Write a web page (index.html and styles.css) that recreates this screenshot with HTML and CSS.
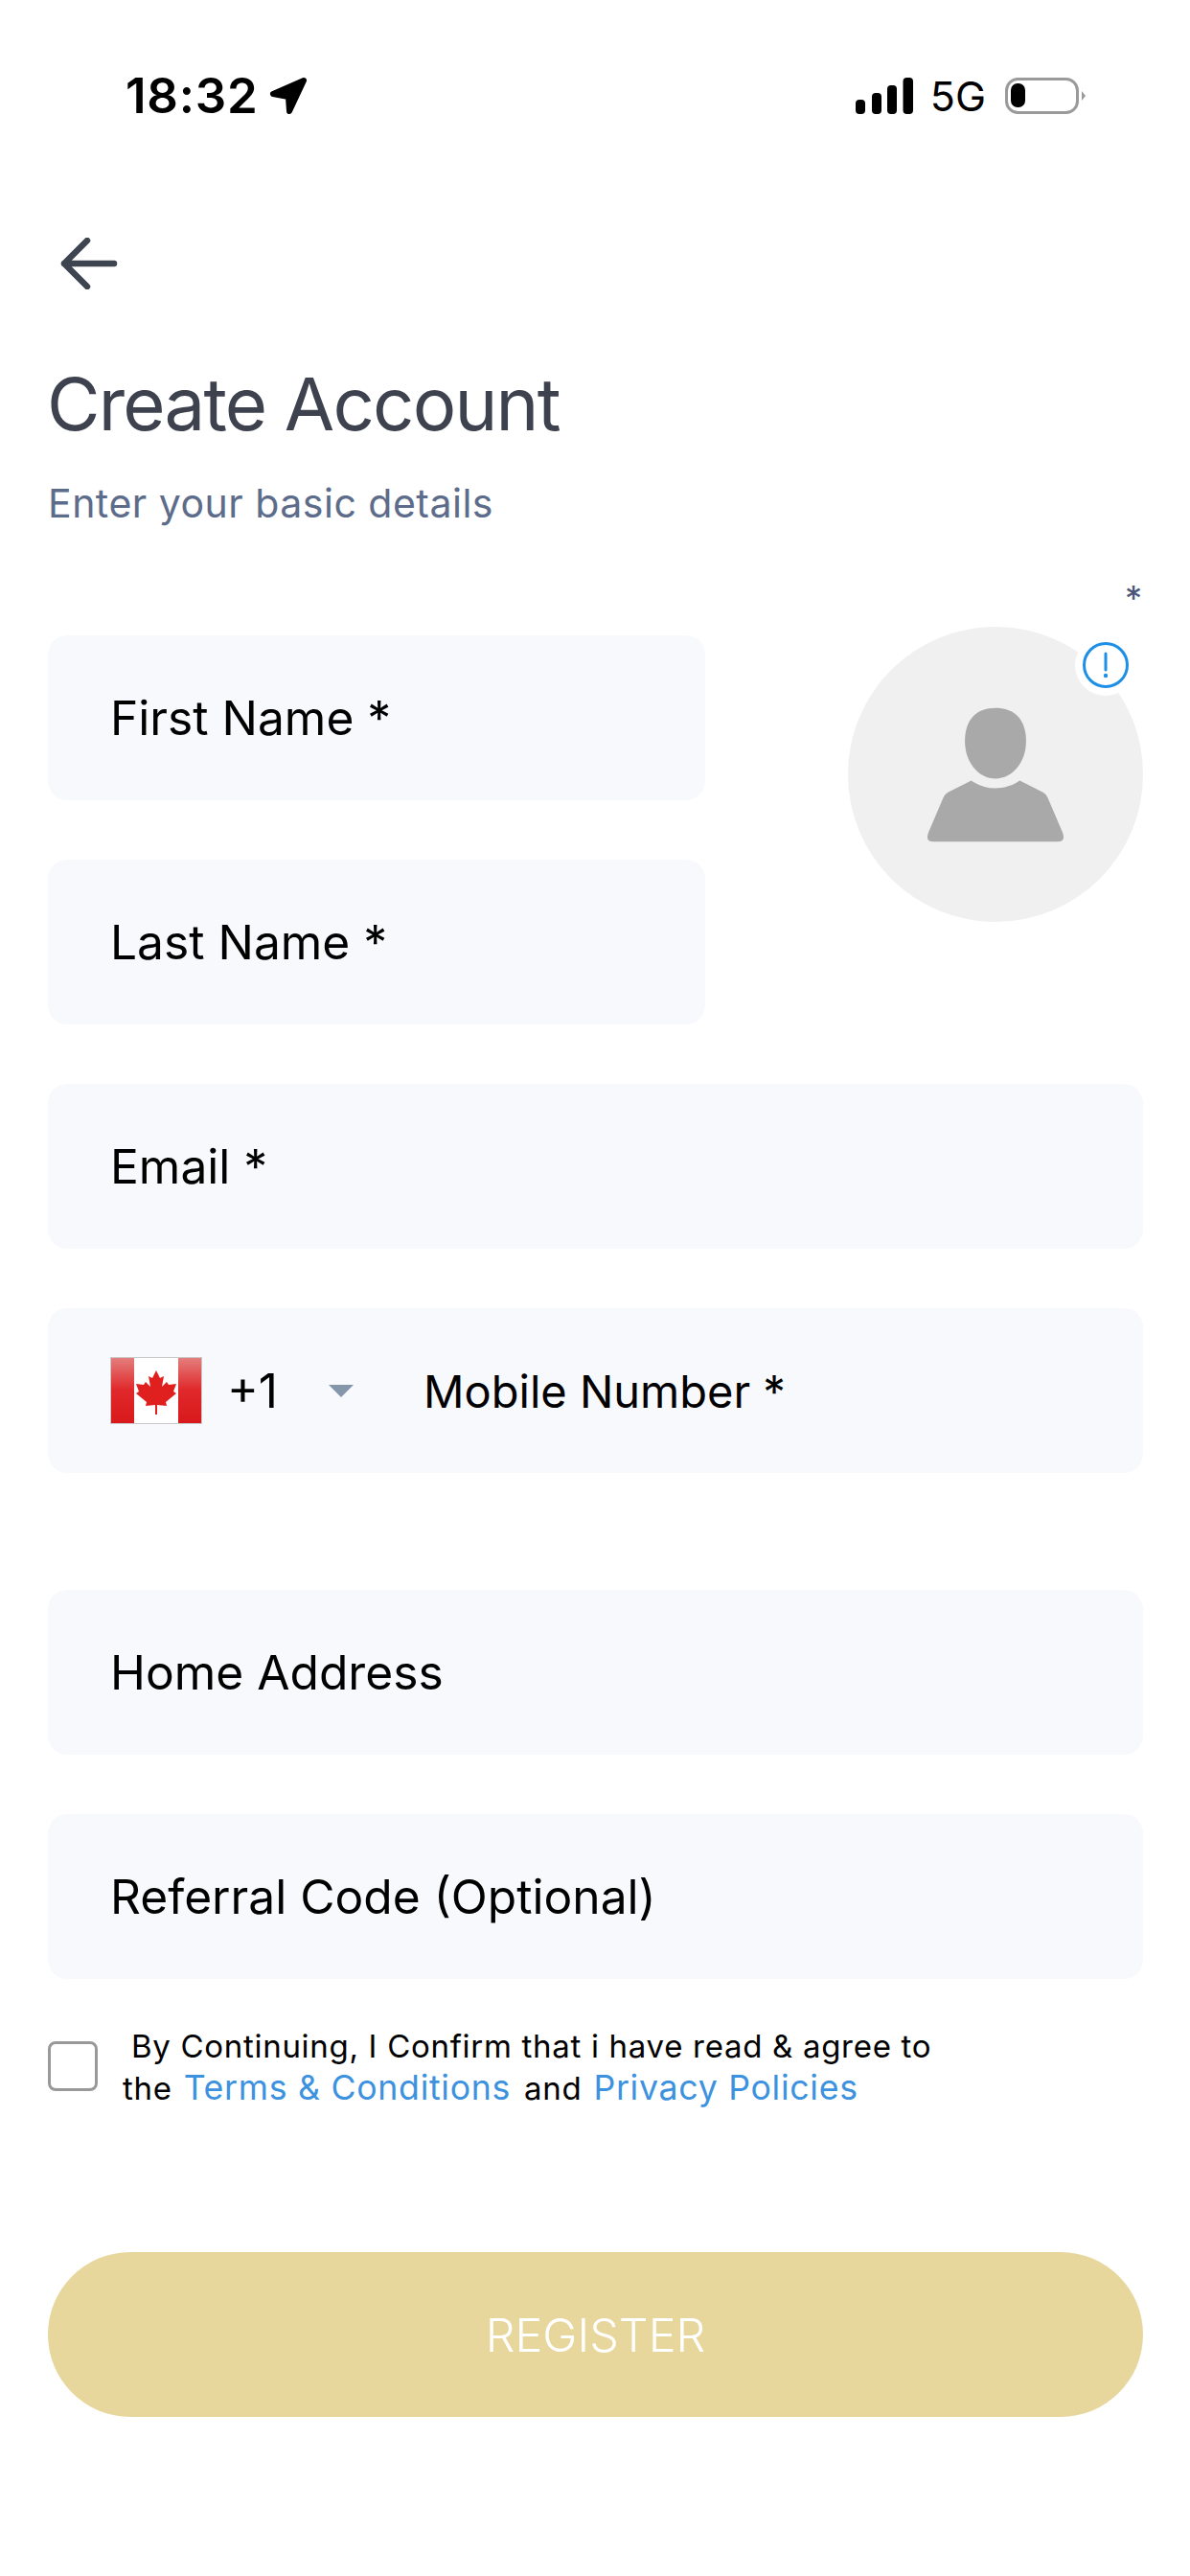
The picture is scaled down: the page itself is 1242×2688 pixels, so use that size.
FILE: index.html
```html
<!DOCTYPE html>
<html lang="en">
<head>
    <meta charset="UTF-8">
    <meta name="viewport" content="width=device-width, initial-scale=1.0">
    <title>Create Account</title>
    <link rel="stylesheet" href="styles.css">
</head>
<body>
    <div class="status-bar">
        <div class="status-left">
            <span class="time">18:32</span>
            <svg class="location" viewBox="0 0 40 40"><path d="M36 4 L4 18 L20 21 L21 36 Z" fill="#000" stroke="#000" stroke-width="6" stroke-linejoin="round"/></svg>
        </div>
        <div class="status-right">
            <svg class="signal" viewBox="0 0 60 38">
                <rect x="0" y="23" width="10" height="15" rx="4"/>
                <rect x="17" y="16" width="10" height="22" rx="4"/>
                <rect x="33" y="8" width="10" height="30" rx="4"/>
                <rect x="49.5" y="0" width="10.5" height="38" rx="4"/>
            </svg>
            <span class="network">5G</span>
            <svg class="battery" viewBox="0 0 84 40">
                <rect x="1.5" y="2.5" width="74" height="35" rx="12" fill="none" stroke="#9a9a9a" stroke-width="3"/>
                <rect x="6" y="7" width="15" height="25" rx="7" fill="#000"/>
                <path d="M80 15 L84 20 L80 25 Z" fill="#9a9a9a"/>
            </svg>
        </div>
    </div>

    <div class="page">
        <svg class="back" viewBox="0 0 62 54"><path d="M57 27 H5 M29 3 L5 27 L29 51" fill="none" stroke="#3e4450" stroke-width="6.5" stroke-linecap="round" stroke-linejoin="round"/></svg>

        <h1 class="title">Create Account</h1>
        <p class="subtitle">Enter your basic details</p>

        <div class="top-row">
            <div class="name-fields">
                <div class="field">First Name *</div>
                <div class="field">Last Name *</div>
            </div>
            <div class="avatar">
                <span class="avatar-star">*</span>
                <svg class="person" viewBox="380 468 432 424">
                    <path d="M596 470 C660 470 692 510 692 575 C692 640 650 692 596 692 C542 692 500 640 500 575 C500 510 532 470 596 470 Z" fill="#a9a9a9"/>
                    <path d="M520 698 C545 715 570 722 596 722 C622 722 647 715 672 698 L745 735 Q755 740 760 752 L806 860 Q818 890 790 890 L402 890 Q374 890 386 860 L432 752 Q437 740 447 735 Z" fill="#a9a9a9"/>
                </svg>
                <div class="avatar-badge">
                    <svg viewBox="0 0 48 48">
                        <circle cx="24" cy="24" r="22.5" fill="none" stroke="#1e8fe6" stroke-width="3"/>
                        <path d="M24 12 V29" stroke="#1e8fe6" stroke-width="3" stroke-linecap="round"/>
                        <circle cx="24" cy="35" r="2.2" fill="#1e8fe6"/>
                    </svg>
                </div>
            </div>
        </div>

        <div class="field">Email *</div>

        <div class="field phone-field">
            <svg class="flag" viewBox="0 0 96 70">
                <defs>
                    <linearGradient id="flagRed" x1="0" y1="0" x2="0" y2="1">
                        <stop offset="0" stop-color="#e4807f"/>
                        <stop offset="0.5" stop-color="#e0282a"/>
                        <stop offset="1" stop-color="#d9191c"/>
                    </linearGradient>
                </defs>
                <rect x="0" y="0" width="96" height="70" fill="#fff"/>
                <rect x="0" y="0" width="25" height="69" fill="url(#flagRed)"/>
                <rect x="71" y="0" width="25" height="69" fill="url(#flagRed)"/>
                <rect x="0.5" y="0.5" width="95" height="69" fill="none" stroke="#c9c9c9"/>
                <path d="M48 14 L52 22 L56 20 L54 31 L59 26 L61 29 L69 28 L66 36 L69 38 L58 47 L59 51 L49 50 L49 60 L47 60 L47 50 L37 51 L38 47 L27 38 L30 36 L27 28 L35 29 L37 26 L42 31 L40 20 L44 22 Z" fill="#e0201f"/>
            </svg>
            <span class="dial-code">+1</span>
            <span class="caret"></span>
            <span class="phone-label">Mobile Number *</span>
        </div>

        <div class="field address-field">Home Address</div>
        <div class="field">Referral Code (Optional)</div>

        <div class="consent">
            <span class="checkbox"></span>
            <p class="consent-text"><span class="consent-first">By Continuing, I Confirm that i have read &amp; agree to</span><br>the <a class="link">Terms &amp; Conditions</a> and <a class="link">Privacy Policies</a></p>
        </div>

        <button class="register">REGISTER</button>
    </div>
</body>
</html>
```

FILE: styles.css
```css
body {
    margin: 0;
    background-color: #fff;
    font-family: Inter, "Noto Sans", sans-serif;
    color: #000;
}

.status-bar {
    display: flex;
    justify-content: space-between;
    align-items: center;
    height: 40px;
    padding: 80px 109px 0 131px;
}

.status-left, .status-right {
    display: flex;
    align-items: center;
}

.time {
    font-size: 51px;
    font-weight: 600;
    line-height: 40px;
    letter-spacing: 0.8px;
}

.location {
    width: 40px;
    height: 40px;
    margin-left: 11px;
}

.signal {
    width: 60px;
    height: 38px;
}

.network {
    font-size: 43px;
    font-weight: 400;
    line-height: 40px;
    margin-left: 18px;
}

.battery {
    width: 84px;
    height: 40px;
    margin-left: 20px;
}

.page {
    padding: 1px 49px 0 50px;
}

.back {
    display: block;
    width: 62px;
    height: 54px;
    margin: 127px 0 0 12px;
}

.title {
    margin: 73px 0 0 -1px;
    font-size: 76px;
    font-weight: 400;
    line-height: 92px;
    letter-spacing: -1.8px;
    color: #3d424e;
}

.subtitle {
    margin: 33px 0 0 0;
    font-size: 41px;
    font-weight: 400;
    line-height: 50px;
    letter-spacing: 0.5px;
    color: #5c6c8a;
}

.top-row {
    display: flex;
    justify-content: space-between;
    align-items: flex-start;
    margin-top: 113px;
}

.name-fields {
    width: 686px;
}

.field {
    display: flex;
    align-items: center;
    height: 172px;
    margin-bottom: 62px;
    padding-left: 65px;
    border-radius: 20px;
    background-color: #f8f9fd;
    font-size: 49.7px;
}

.avatar {
    position: relative;
    display: flex;
    justify-content: center;
    align-items: center;
    width: 308px;
    height: 308px;
    margin-top: -9px;
    border-radius: 50%;
    background-color: #f0f0f0;
}

.person {
    width: 144px;
    height: 141px;
}

.avatar-star {
    position: absolute;
    top: -50px;
    right: 1px;
    font-size: 36px;
    line-height: 40px;
    color: #4a5578;
}

.avatar-badge {
    position: absolute;
    top: 8px;
    right: 7px;
    display: flex;
    justify-content: center;
    align-items: center;
    width: 64px;
    height: 64px;
    border-radius: 50%;
    background-color: #fff;
}

.avatar-badge svg {
    width: 48px;
    height: 48px;
}

.flag {
    width: 96px;
    height: 70px;
    flex-shrink: 0;
}

.dial-code {
    margin-left: 26px;
}

.caret {
    width: 0;
    height: 0;
    margin-left: 53px;
    border-left: 13px solid transparent;
    border-right: 13px solid transparent;
    border-top: 13px solid #8496a9;
}

.phone-label {
    margin-left: 73px;
    font-size: 47px;
}

.address-field {
    margin-top: 122px;
}

.consent {
    display: flex;
    align-items: flex-start;
    margin-top: -13px;
}

.checkbox {
    width: 46px;
    height: 46px;
    margin-top: 16px;
    flex-shrink: 0;
    border: 3px solid #999;
    border-radius: 8px;
}

.consent-text {
    margin: 0 0 0 26px;
    font-size: 33px;
    line-height: 43px;
    letter-spacing: 0.7px;
}

.consent-first {
    margin-left: 9px;
}

.link {
    margin: 0 4px 0 2px;
    font-size: 35.7px;
    color: #3d92e0;
}

.register {
    display: block;
    width: 1143px;
    height: 172px;
    margin-top: 149px;
    border: 0;
    border-radius: 86px;
    background-color: #e8d79c;
    font-family: Inter, "Noto Sans", sans-serif;
    font-size: 48.5px;
    font-weight: 300;
    color: #fff;
}
```
